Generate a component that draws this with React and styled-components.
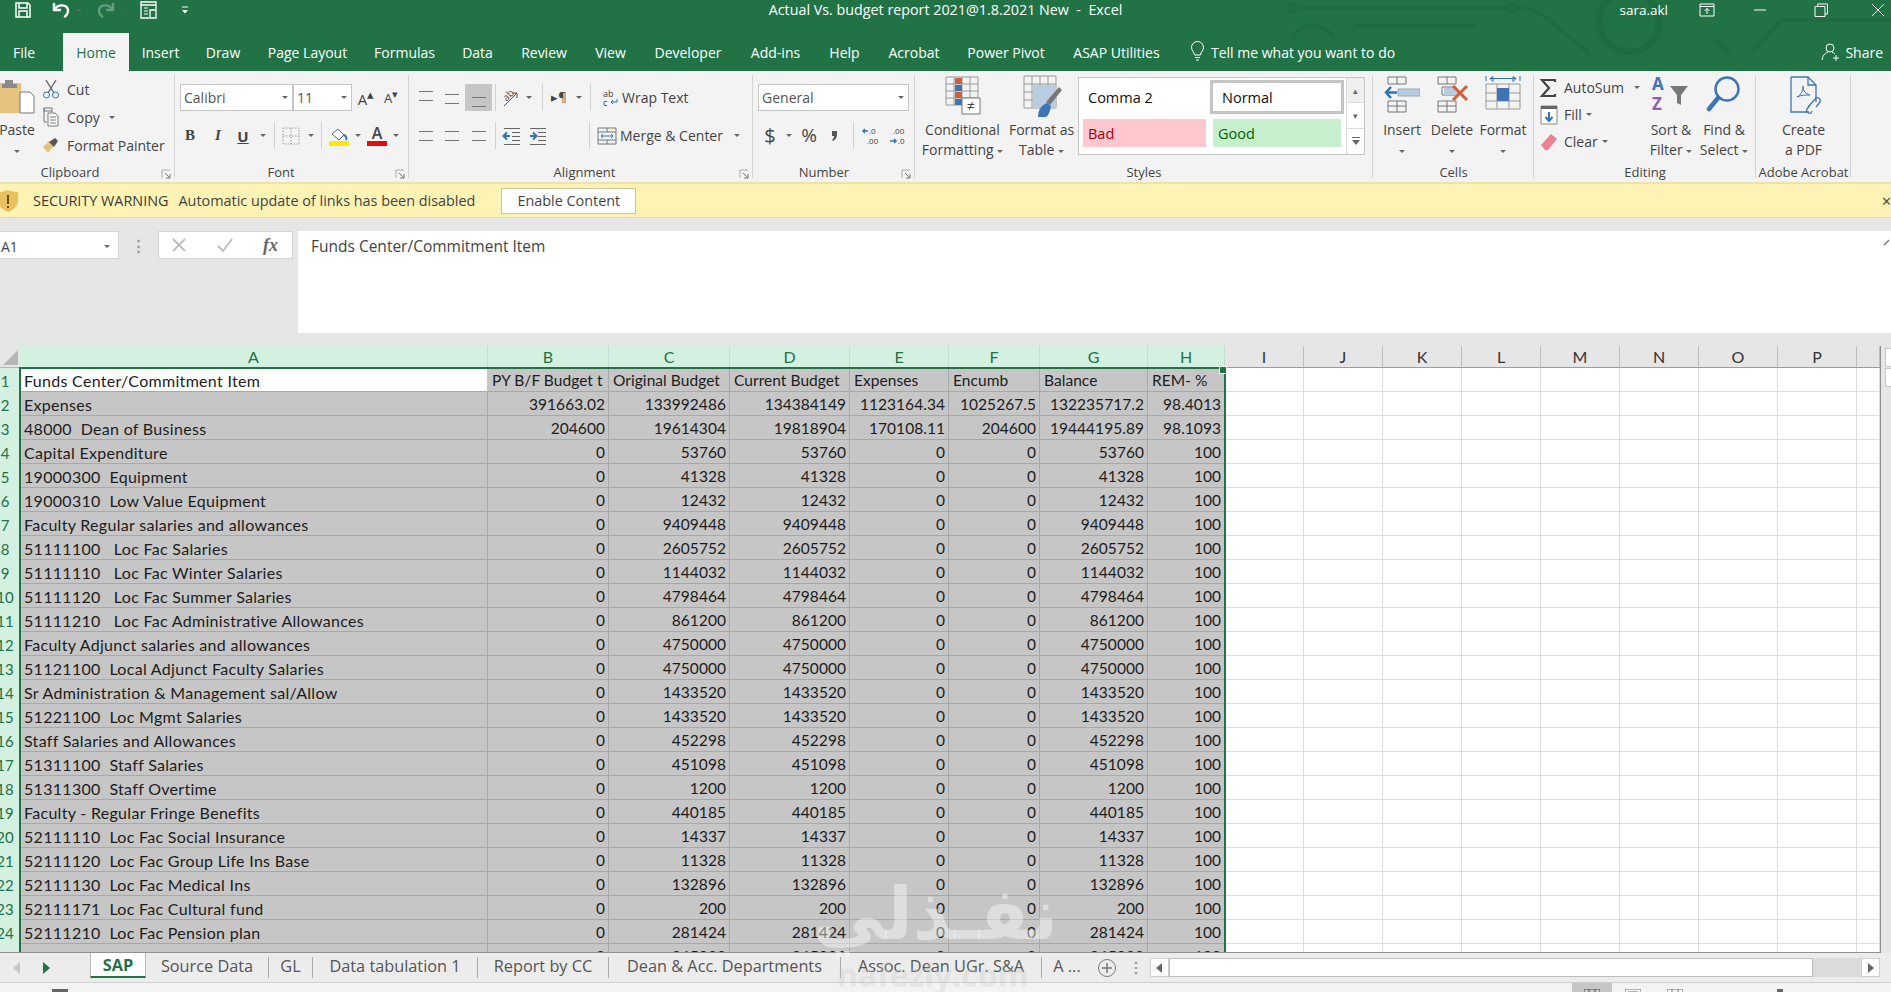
import React from 'react'
import styled, { createGlobalStyle } from 'styled-components'

const GREEN = '#217346'
const UI = '"Open Sans", "Noto Sans", sans-serif'
const CELL = 'Lato, "Noto Sans", sans-serif'

const Global = createGlobalStyle`
  html, body { margin: 0; padding: 0; background: #f3f3f3; overflow: hidden; }
  #root { width: 1891px; height: 992px; overflow: hidden; }
`

const Page = styled.div`
  position: relative;
  width: 1891px;
  height: 992px;
  overflow: hidden;
  display: flex;
  flex-direction: column;
  font-family: ${UI};
  color: #444;
  background: #e6e6e6;
`

/* title bar */
const Head = styled.header`
  position: relative;
  background: ${GREEN};
  color: #fff;
  height: 71px;
  flex: none;
`
const Circuit = styled.svg`
  position: absolute;
  right: 0;
  top: 0;
`
const TitleRow = styled.div`
  position: relative;
  display: grid;
  grid-template-columns: 1fr auto 1fr;
  height: 33px;
`
const Quick = styled.div`
  display: flex;
  align-items: center;
  height: 20px;
`
const QuickSlot = styled.span`
  width: ${p => p.$w}px;
  margin-left: ${p => p.$ml || 0}px;
  display: flex;
  justify-content: center;
  opacity: ${p => (p.$dim ? 0.3 : 1)};
`
const Title = styled.div`
  font-size: 14.3px;
  line-height: 20px;
  white-space: pre;
`
const WindowBtns = styled.div`
  display: flex;
  justify-content: flex-end;
  align-items: center;
  height: 20px;
`
const UserName = styled.span`
  font-size: 13.5px;
  margin-right: 30px;
`
const WinSlot = styled.span`
  width: ${p => p.$w}px;
  margin-left: ${p => p.$ml || 0}px;
  display: flex;
  justify-content: center;
`
const TabRow = styled.nav`
  position: relative;
  display: flex;
  height: 38px;
  align-items: stretch;
  font-size: 14px;
`
const RibbonTab = styled.div`
  display: flex;
  align-items: center;
  white-space: pre;
  width: ${p => p.$w}px;
  margin-right: ${p => p.$mr || 0}px;
  justify-content: center;
  flex: none;
  ${p => p.$active && `background:#f3f3f3;color:${GREEN};`}
`
const TellMe = styled.div`
  display: flex;
  align-items: center;
  gap: 6px;
  margin-left: 15px;
`
const Share = styled.div`
  margin-left: auto;
  margin-right: 8px;
  display: flex;
  align-items: center;
  gap: 4px;
`

/* ribbon */
const Ribbon = styled.section`
  display: flex;
  height: 111px;
  flex: none;
  background: #f3f3f3;
  font-size: 14px;
  color: #444;
`
const Group = styled.div`
  position: relative;
  width: ${p => p.$w}px;
  flex: none;
  display: flex;
  flex-direction: column;
  &::after {
    content: '';
    position: absolute;
    right: 0;
    top: 4px;
    bottom: 4px;
    width: 1px;
    background: #d4d4d4;
  }
`
const GroupBody = styled.div`
  height: 92px;
  display: flex;
`
const GroupLabel = styled.div`
  height: 18px;
  line-height: 18px;
  text-align: center;
  font-size: 13px;
  white-space: nowrap;
  padding: 0 ${p => p.$pr || 0}px 0 ${p => p.$pl || 0}px;
`
const Launcher = styled.svg`
  position: absolute;
  right: 4px;
  bottom: 3px;
`
const Stack = styled.div`
  display: flex;
  flex-direction: column;
  ${p => p.$w && `width:${p.$w}px;flex:none;`}
`
const ToolRow = styled.div`
  display: flex;
  align-items: center;
  height: 27px;
  margin-top: ${p => p.$mt}px;
  padding-left: ${p => p.$pl || 0}px;
`
const Slot = styled.span`
  width: ${p => p.$w}px;
  height: 27px;
  flex: none;
  display: flex;
  align-items: center;
  justify-content: center;
  color: #444;
  ${p => p.$on && 'background:#c6c6c6;'}
`
const Sep = styled.i`
  width: 1px;
  height: 27px;
  flex: none;
  background: #d0d0d0;
  margin: 0 ${p => p.$mr ?? 2}px 0 ${p => p.$ml ?? 2}px;
`
const Combo = styled.div`
  width: ${p => p.$w}px;
  height: 27px;
  flex: none;
  box-sizing: border-box;
  border: 1px solid #c6c6c6;
  background: #fff;
  display: flex;
  align-items: center;
  justify-content: space-between;
  padding: 0 4px 0 3px;
  color: #555;
`
const Bold = styled.b`
  font-size: 15px;
  font-family: "Liberation Serif", serif;
`
const ItalicMark = styled.i`
  font-size: 15px;
  font-weight: 700;
  font-family: "Liberation Serif", serif;
`
const UnderMark = styled.u`
  font-size: 15px;
  font-weight: 700;
`
const Symbol = styled.span`
  font-size: ${p => p.$size || 18}px;
  font-weight: ${p => p.$weight || 400};
  line-height: 1;
`
const SmallRow = styled.div`
  display: flex;
  align-items: center;
  height: ${p => p.$h}px;
  margin-left: ${p => p.$ml || 0}px;
  white-space: nowrap;
`
const SmallIcon = styled.span`
  width: ${p => p.$w}px;
  flex: none;
  display: flex;
  justify-content: center;
`
const Caret = styled.span`
  display: inline-block;
  width: 0;
  height: 0;
  border-left: 3px solid transparent;
  border-right: 3px solid transparent;
  border-top: 3.5px solid #666;
  margin-left: ${p => p.$ml ?? 0}px;
  vertical-align: middle;
`
const BigBtn = styled.div`
  width: ${p => p.$w}px;
  flex: none;
  display: flex;
  flex-direction: column;
  align-items: center;
  white-space: nowrap;
  margin-left: ${p => p.$ml || 0}px;
`
const BigIcon = styled.div`
  height: 49px;
  padding-top: 4px;
  box-sizing: border-box;
`
const BigLine = styled.div`
  height: 20px;
  line-height: 20px;
  text-align: center;
`
const Gallery = styled.div`
  margin: 6px 0 0 0;
  width: 287px;
  height: 78px;
  box-sizing: border-box;
  border: 1px solid #c6c6c6;
  background: #fff;
  display: flex;
`
const StyleGrid = styled.div`
  width: 267px;
  display: grid;
  grid-template-columns: 131px 136px;
  grid-template-rows: 39px 37px;
`
const StyleCell = styled.div`
  display: flex;
  align-items: center;
  padding-left: ${p => p.$pl || 9}px;
  margin: ${p => p.$m || 0};
  font-size: 14.5px;
  background: ${p => p.$bg || '#fff'};
  color: ${p => p.$fg || '#111'};
  ${p => p.$boxed && 'border:3px solid #c4c4c4;margin:2px 2px 3px 0;padding-left:9px;'}
`
const GalleryScroll = styled.div`
  flex: 1;
  display: grid;
  grid-template-rows: 1fr 1fr 1fr;
  border-left: 1px solid #dcdcdc;
  color: #666;
  font-size: 9px;
`
const GalleryBtn = styled.div`
  display: flex;
  align-items: center;
  justify-content: center;
  background: ${p => (p.$dim ? '#efefef' : '#fff')};
  border-bottom: 1px solid #dcdcdc;
  &:last-child { border-bottom: 0; }
`

/* security warning */
const Warning = styled.div`
  height: 36px;
  flex: none;
  box-sizing: border-box;
  background: #fdf3b4;
  border-top: 2px solid #ece3a8;
  border-bottom: 1px solid #e2dca4;
  display: flex;
  align-items: center;
  font-size: 14.4px;
  color: #444;
  white-space: pre;
`
const WarningTitle = styled.span`
  margin-left: 13px;
  color: #3a3a3a;
`
const WarningText = styled.span`
  margin-left: 10px;
`
const EnableBtn = styled.div`
  margin-left: 26px;
  width: 135px;
  height: 26px;
  box-sizing: border-box;
  background: #fff;
  border: 1px solid #c9c5a0;
  display: flex;
  align-items: center;
  justify-content: center;
`
const WarningClose = styled.span`
  margin-left: auto;
  margin-right: -1px;
  font-size: 13px;
  color: #555;
`

/* formula bar */
const FormulaBar = styled.div`
  height: 102px;
  margin-top: 13px;
  flex: none;
  display: flex;
  align-items: flex-start;
  font-size: 15.5px;
`
const NameBox = styled.div`
  width: 119px;
  height: 28px;
  box-sizing: border-box;
  background: #fff;
  border: 1px solid #d4d4d4;
  border-left: 0;
  display: flex;
  align-items: center;
  justify-content: space-between;
  padding: 2px 8px 0 1px;
  font-size: 14px;
  color: #444;
`
const Dots = styled.span`
  width: 39px;
  height: 28px;
  display: flex;
  align-items: center;
  justify-content: center;
  color: #999;
  font-size: 15px;
  font-weight: 700;
`
const FormulaBtns = styled.div`
  width: 135px;
  height: 28px;
  box-sizing: border-box;
  background: #fff;
  border: 1px solid #d4d4d4;
  display: flex;
  align-items: center;
  padding-left: 12px;
  gap: 29px;
  color: #bbb;
`
const Fx = styled.i`
  font-family: "Liberation Serif", serif;
  font-size: 18px;
  font-weight: 700;
  color: #666;
`
const FormulaInput = styled.div`
  margin-left: 5px;
  flex: 1;
  height: 102px;
  box-sizing: border-box;
  background: #fff;
  padding: 4px 0 0 13px;
  line-height: 22px;
  color: #444;
  position: relative;
`
const Collapse = styled.svg`
  position: absolute;
  right: 0;
  top: 8px;
`

/* sheet */
const SheetArea = styled.div`
  margin-top: 13px;
  height: 607px;
  flex: none;
  display: flex;
`
const Sheet = styled.div`
  position: relative;
  width: 1881px;
  box-sizing: border-box;
  border-right: 1px solid #8f8f8f;
  border-bottom: 1px solid #8f8f8f;
  background: #fff;
  overflow: hidden;
`
const SheetGrid = styled.div`
  display: grid;
  grid-template-columns: 20px 468px 121px 121px 120px 99px 91px 108px 77px repeat(8, 79px) 23px;
  grid-template-rows: 22px repeat(25, 24px);
`
const Corner = styled.div`
  background: #e6e6e6;
  border-bottom: 1px solid #b5b5b5;
  display: flex;
  align-items: flex-end;
  justify-content: flex-end;
  padding: 0 2px 2px 0;
  box-sizing: border-box;
`
const ColHead = styled.div`
  box-sizing: border-box;
  display: flex;
  align-items: center;
  justify-content: center;
  font-family: ${CELL};
  font-size: 16px;
  background: ${p => (p.$on ? '#d3f0e0' : '#e6e6e6')};
  color: ${p => (p.$on ? GREEN : '#333')};
  border-right: 1px solid ${p => (p.$on ? '#bfe0cf' : '#bdbdbd')};
  border-bottom: 1px solid ${p => (p.$on ? GREEN : '#9c9c9c')};
`
const RowHead = styled.div`
  box-sizing: border-box;
  background: #d3f0e0;
  color: ${GREEN};
  font-family: ${CELL};
  font-size: 15px;
  display: flex;
  align-items: center;
  justify-content: center;
  padding: 1px 10px 0 0;
  width: 20px;
  overflow: visible;
`
const Cell = styled.div`
  box-sizing: border-box;
  font-family: ${CELL};
  font-size: ${p => (p.$label ? 16 : 15.5)}px;
  letter-spacing: ${p => (p.$label ? 0.3 : 0.05)}px;
  line-height: 25px;
  white-space: pre;
  overflow: hidden;
  color: #1c1c1c;
  text-align: ${p => (p.$right ? 'right' : 'left')};
  padding: ${p => (p.$right ? '0 3px 0 0' : '0 0 0 4px')};
  background: ${p => (p.$sel ? (p.$white ? '#fff' : '#c6c6c6') : '#fff')};
  border-right: 1px solid ${p => (p.$sel ? (p.$white ? '#c6c6c6' : '#a8a8a8') : '#dcdcdc')};
  border-bottom: 1px solid ${p => (p.$sel ? '#a8a8a8' : '#dcdcdc')};
`
const SelectionFrame = styled.div`
  position: absolute;
  left: 19px;
  top: 21px;
  width: 1207px;
  height: 620px;
  box-sizing: border-box;
  border: 2px solid ${GREEN};
  pointer-events: none;
  &::after {
    content: '';
    position: absolute;
    right: -3px;
    top: -3px;
    width: 6px;
    height: 6px;
    background: ${GREEN};
    border: 1px solid #fff;
  }
`
const VScroll = styled.div`
  flex: 1;
  display: flex;
  flex-direction: column;
  gap: 1px;
  padding: 2px 0 0 4px;
  background: #e6e6e6;
`
const VBtn = styled.div`
  height: ${p => p.$h}px;
  background: #fff;
  border: 1px solid #c8c8c8;
  border-right: 0;
  box-sizing: border-box;
`

/* sheet tabs */
const TabStrip = styled.div`
  height: 29px;
  flex: none;
  display: flex;
  background: #ececec;
  font-size: 16.3px;
  color: #555;
`
const NavSlot = styled.span`
  width: ${p => p.$w}px;
  flex: none;
  display: flex;
  align-items: center;
  justify-content: center;
`
const SheetTab = styled.div`
  height: 25px;
  flex: none;
  width: ${p => p.$w}px;
  box-sizing: border-box;
  display: flex;
  align-items: center;
  justify-content: center;
  white-space: nowrap;
  ${p => p.$active && `background:#fff;color:${GREEN};font-weight:700;border-bottom:2px solid ${GREEN};border-left:1px solid #bbb;border-right:1px solid #bbb;`}
`
const TabSep = styled.i`
  width: 1px;
  height: 21px;
  margin-top: 4px;
  flex: none;
  background: #aaa;
`
const HScroll = styled.div`
  margin: 5px 0 0 0;
  width: 730px;
  height: 19px;
  display: flex;
`
const HBtn = styled.div`
  width: 19px;
  box-sizing: border-box;
  background: #fff;
  border: 1px solid #cfcfcf;
  display: flex;
  align-items: center;
  justify-content: center;
`
const HThumb = styled.div`
  width: 645px;
  background: #fff;
  box-sizing: border-box;
  border: 1px solid #bdbdbd;
`
const HTrack = styled.div`
  width: 48px;
  background: #dbdbdb;
`

/* status bar */
const StatusBar = styled.footer`
  flex: 1;
  display: flex;
  background: #f3f3f3;
  border-top: 1px solid #cfcfcf;
  overflow: hidden;
`
const ViewBtn = styled.span`
  width: ${p => p.$w}px;
  margin-left: ${p => p.$ml || 0}px;
  flex: none;
  display: flex;
  justify-content: center;
  padding-top: 6px;
  ${p => p.$on && 'background:#c6c6c6;'}
`

/* site watermark burnt into the picture */
const Watermark = styled.div`
  position: absolute;
  left: 813px;
  top: 868px;
  width: 240px;
  text-align: center;
  color: rgba(255, 255, 255, 0.42);
  font-family: "DejaVu Sans", sans-serif;
  font-weight: 700;
  font-size: 72px;
  line-height: 92px;
  white-space: nowrap;
  pointer-events: none;
`
const WatermarkUrl = styled.div`
  font-size: 32px;
  line-height: 30px;
  color: rgba(200, 200, 200, 0.3);
  font-family: "Open Sans", sans-serif;
`

const Ico = ({ w, h, children }) => (
  <svg width={w} height={h} viewBox={`0 0 ${w} ${h}`} fill="none">{children}</svg>
)

const Launch = () => (
  <Launcher width="10" height="10" viewBox="0 0 10 10" fill="none">
    <path d="M1 9V1h8" stroke="#aaa" />
    <path d="M4 4l5 5M9 5v4H5" stroke="#777" />
  </Launcher>
)

const AlignLines = ({ y, widths, align = 'l' }) => (
  <Ico w={18} h={20}>
    {widths.map((l, i) => {
      const x = align === 'l' ? 2 : align === 'r' ? 16 - l : 9 - l / 2
      return <path key={i} d={`M${x} ${y + i * 4.5}.5h${l}`} stroke="#777" />
    })}
  </Ico>
)

const IndentIcon = ({ flip }) => (
  <Ico w={20} h={20}>
    {[2, 6, 10, 14, 18].map(y => <path key={y} d={`M${y === 2 || y === 18 ? 2 : 10} ${y}.5H18`} stroke="#666" />)}
    <path d={flip ? 'M2 10h6M5 6.5L8.5 10 5 13.5' : 'M8 10H2M5 6.5L1.5 10 5 13.5'} stroke="#2f75b5" strokeWidth="2" />
  </Ico>
)

const ribbonTabs = [
  ['File', 48, false, 15], ['Home', 66, true], ['Insert', 63], ['Draw', 62], ['Page Layout', 107], ['Formulas', 87],
  ['Data', 59], ['Review', 74], ['View', 59], ['Developer', 96], ['Add-ins', 79], ['Help', 59],
  ['Acrobat', 80], ['Power Pivot', 104], ['ASAP Utilities', 117],
]

const columns = ['A', 'B', 'C', 'D', 'E', 'F', 'G', 'H']
const freeColumns = ['I', 'J', 'K', 'L', 'M', 'N', 'O', 'P', '']

const header = ['Funds Center/Commitment Item', 'PY B/F Budget t', 'Original Budget', 'Current Budget', 'Expenses', 'Encumb', 'Balance', 'REM- %']

const zeroRow = (label, value) => [label, '0', value, value, '0', '0', value, '100']

const rows = [
  ['Expenses', '391663.02', '133992486', '134384149', '1123164.34', '1025267.5', '132235717.2', '98.4013'],
  ['48000  Dean of Business', '204600', '19614304', '19818904', '170108.11', '204600', '19444195.89', '98.1093'],
  zeroRow('Capital Expenditure', '53760'),
  zeroRow('19000300  Equipment', '41328'),
  zeroRow('19000310  Low Value Equipment', '12432'),
  zeroRow('Faculty Regular salaries and allowances', '9409448'),
  zeroRow('51111100   Loc Fac Salaries', '2605752'),
  zeroRow('51111110   Loc Fac Winter Salaries', '1144032'),
  zeroRow('51111120   Loc Fac Summer Salaries', '4798464'),
  zeroRow('51111210   Loc Fac Administrative Allowances', '861200'),
  zeroRow('Faculty Adjunct salaries and allowances', '4750000'),
  zeroRow('51121100  Local Adjunct Faculty Salaries', '4750000'),
  zeroRow('Sr Administration & Management sal/Allow', '1433520'),
  zeroRow('51221100  Loc Mgmt Salaries', '1433520'),
  zeroRow('Staff Salaries and Allowances', '452298'),
  zeroRow('51311100  Staff Salaries', '451098'),
  zeroRow('51311300  Staff Overtime', '1200'),
  zeroRow('Faculty - Regular Fringe Benefits', '440185'),
  zeroRow('52111110  Loc Fac Social Insurance', '14337'),
  zeroRow('52111120  Loc Fac Group Life Ins Base', '11328'),
  zeroRow('52111130  Loc Fac Medical Ins', '132896'),
  zeroRow('52111171  Loc Fac Cultural fund', '200'),
  zeroRow('52111210  Loc Fac Pension plan', '281424'),
  zeroRow('Administration and Management of Loc F', '265000'),
]

const TitleBar = () => (
  <Head>
    <Circuit width="620" height="71" viewBox="0 0 620 71" fill="none" stroke="#1f6c42" strokeWidth="4">
      <circle cx="21" cy="8" r="4" />
      <path d="M25 8h212M245 8c20 0 30 8 40 18l34 28" />
      <circle cx="241" cy="8" r="4" />
      <circle cx="358" cy="22" r="30" strokeWidth="7" />
      <path d="M22 38c4-16 34-16 40 0M80 30l5-4h120M480 54l30-34h110M460 54l-16-14" />
    </Circuit>
    <TitleRow>
      <Quick>
        <QuickSlot $w={18} $ml={14}>
          <Ico w={18} h={18}>
            <path d="M2 2h12l2 2v12H2z" stroke="#fff" strokeWidth="1.5" />
            <path d="M5 2v5h8V2M5 16v-6h8v6" stroke="#fff" strokeWidth="1.5" />
          </Ico>
        </QuickSlot>
        <QuickSlot $w={20} $ml={20}>
          <Ico w={20} h={18}>
            <path d="M3 8c3-5 12-5 13 1 .5 3-2 6-4 7" stroke="#fff" strokeWidth="2.4" />
            <path d="M2 2v7h7" stroke="#fff" strokeWidth="2.4" />
          </Ico>
        </QuickSlot>
        <QuickSlot $w={10} $ml={2}><Caret /></QuickSlot>
        <QuickSlot $w={20} $ml={11} $dim>
          <Ico w={20} h={18}>
            <path d="M17 8c-3-5-12-5-13 1-.5 3 2 6 4 7" stroke="#fff" strokeWidth="2.4" />
            <path d="M18 2v7h-7" stroke="#fff" strokeWidth="2.4" />
          </Ico>
        </QuickSlot>
        <QuickSlot $w={10} $ml={2} $dim><Caret /></QuickSlot>
        <QuickSlot $w={20} $ml={12}>
          <Ico w={20} h={18}>
            <path d="M2 1h15v3H2zM2 4v13h8M17 4v4" stroke="#fff" strokeWidth="1.3" />
            <path d="M5 7h4M5 10h4M5 13h4" stroke="#fff" />
            <path d="M11 9h6v8h-6z" stroke="#fff" strokeWidth="1.3" />
          </Ico>
        </QuickSlot>
        <QuickSlot $w={10} $ml={21}>
          <Ico w={10} h={10}>
            <path d="M2 2h6" stroke="#fff" />
            <path d="M2 5h6L5 8.5z" fill="#fff" />
          </Ico>
        </QuickSlot>
      </Quick>
      <Title>Actual Vs. budget report 2021@1.8.2021 New  -  Excel</Title>
      <WindowBtns>
        <UserName>sara.akl</UserName>
        <WinSlot $w={18}>
          <Ico w={16} h={14}>
            <path d="M1 1h14v12H1zM1 3.5h14M8 11V5.5M5.5 8L8 5.5 10.500 8" stroke="#fff" />
          </Ico>
        </WinSlot>
        <WinSlot $w={26} $ml={31}>
          <Ico w={14} h={14}><path d="M1 7h12" stroke="#fff" /></Ico>
        </WinSlot>
        <WinSlot $w={26} $ml={35}>
          <Ico w={14} h={14}><path d="M1 3.500h10v10H1zM3.500 3V1h10v10H11" stroke="#fff" /></Ico>
        </WinSlot>
        <WinSlot $w={26} $ml={31}>
          <Ico w={14} h={14}><path d="M1 1l12 12M13 1L1 13" stroke="#fff" /></Ico>
        </WinSlot>
      </WindowBtns>
    </TitleRow>
    <TabRow>
      {ribbonTabs.map(([label, w, active, mr]) => (
        <RibbonTab key={label} $w={w} $active={active} $mr={mr}>{label}</RibbonTab>
      ))}
      <TellMe>
        <Ico w={15} h={22}>
          <path d="M4.500 14c0-3-3-4-3-7.500a6 6 0 0 1 12 0c0 3.500-3 4.500-3 7.500zM5 16.500h5M6 19h3" stroke="#fff" />
        </Ico>
        Tell me what you want to do
      </TellMe>
      <Share>
        <Ico w={20} h={20}>
          <circle cx="9" cy="6" r="4" stroke="#fff" />
          <path d="M1 18c1-6 4-7 6-8M11 10c1 .3 2 1 3 2M15 13v6M12 16h6" stroke="#fff" />
        </Ico>
        Share
      </Share>
    </TabRow>
  </Head>
)

const ClipboardGroup = () => (
  <Group $w={175}>
    <GroupBody>
      <BigBtn $w={34}>
        <BigIcon>
          <Ico w={36} h={42}>
            <path d="M-4 8h26v30H-4z" fill="#e7c27d" />
            <path d="M6 5h8v4h4v4H3V9h3z" fill="#8a8a8a" />
            <path d="M21 17h10l4 4v17H21z" fill="#fff" stroke="#777" />
          </Ico>
        </BigIcon>
        <BigLine>Paste</BigLine>
        <BigLine><Caret /></BigLine>
      </BigBtn>
      <Stack>
        <SmallRow $h={4} />
        <SmallRow $h={28}>
          <SmallIcon $w={33}>
            <Ico w={18} h={20}>
              <path d="M4 1l8 13M14 1L6 14" stroke="#666" strokeWidth="1.4" />
              <circle cx="4.500" cy="16" r="3" stroke="#2f75b5" />
              <circle cx="13.500" cy="16" r="3" stroke="#2f75b5" />
            </Ico>
          </SmallIcon>
          Cut
        </SmallRow>
        <SmallRow $h={28}>
          <SmallIcon $w={33}>
            <Ico w={18} h={20}>
              <path d="M2 1h8v3H2zM2 1v14h3M10 4v1" stroke="#777" />
              <path d="M6 6h7l3 3v10H6zM8 10h6M8 13h6M8 16h6" stroke="#777" fill="#fff" />
            </Ico>
          </SmallIcon>
          Copy
          <Caret $ml={9} />
        </SmallRow>
        <SmallRow $h={28}>
          <SmallIcon $w={33}>
            <Ico w={18} h={18}>
              <path d="M1 11l6-6 5 5-6 7z" fill="#e7c27d" />
              <path d="M7 6l6-4 3 3-4 6z" fill="#555" />
            </Ico>
          </SmallIcon>
          Format Painter
        </SmallRow>
      </Stack>
    </GroupBody>
    <GroupLabel $pr={35}>Clipboard</GroupLabel>
    <Launch />
  </Group>
)

const FontGroup = () => (
  <Group $w={234}>
    <GroupBody>
      <Stack>
        <ToolRow $mt={13} $pl={5}>
          <Combo $w={113}>Calibri<Caret /></Combo>
          <Combo $w={59}>11<Caret /></Combo>
          <Slot $w={28}><Symbol $size={15}>A<sup>▴</sup></Symbol></Slot>
          <Slot $w={22}><Symbol $size={13}>A<sup>▾</sup></Symbol></Slot>
        </ToolRow>
        <ToolRow $mt={11} $pl={1}>
          <Slot $w={28}><Bold>B</Bold></Slot>
          <Slot $w={28}><ItalicMark>I</ItalicMark></Slot>
          <Slot $w={22}><UnderMark>U</UnderMark></Slot>
          <Slot $w={18}><Caret /></Slot>
          <Sep />
          <Slot $w={28}>
            <Ico w={18} h={18}>
              <path d="M1 1h16v16H1zM9 1v16M1 9h16" stroke="#999" strokeDasharray="1.500 1.500" />
            </Ico>
          </Slot>
          <Slot $w={12}><Caret /></Slot>
          <Sep $ml={4} $mr={3} />
          <Slot $w={28}>
            <Ico w={22} h={22}>
              <path d="M4 9l6-5 6 6-5 5z" stroke="#666" fill="#fff" />
              <path d="M16 10c2 1 3 3 2 5" stroke="#2f75b5" strokeWidth="2" />
              <path d="M1 16h20v5H1z" fill="#ffea00" />
            </Ico>
          </Slot>
          <Slot $w={10}><Caret /></Slot>
          <Slot $w={28}>
            <Ico w={22} h={22}>
              <text x="11" y="14" textAnchor="middle" fontSize="16" fontWeight="600" fontFamily={UI} fill="#444">A</text>
              <path d="M1 16h20v5H1z" fill="#e01010" />
            </Ico>
          </Slot>
          <Slot $w={10}><Caret /></Slot>
        </ToolRow>
      </Stack>
    </GroupBody>
    <GroupLabel $pr={22}>Font</GroupLabel>
    <Launch />
  </Group>
)

const AlignmentGroup = () => (
  <Group $w={344}>
    <GroupBody>
      <Stack>
        <ToolRow $mt={13} $pl={4}>
          <Slot $w={26}><AlignLines y={3} widths={[14, 14, 14]} /></Slot>
          <Slot $w={26}><AlignLines y={6} widths={[14, 14, 14]} /></Slot>
          <Slot $w={27} $on><AlignLines y={9} widths={[14, 14, 14]} /></Slot>
          <Sep $ml={3} $mr={3} />
          <Slot $w={26}>
            <Ico w={20} h={20}>
              <text x="1" y="11" fontSize="10" fontFamily={UI} fill="#555" transform="rotate(-45 6 8)">ab</text>
              <path d="M2 18l13-13M15 5v5M15 5h-5" stroke="#555" />
            </Ico>
          </Slot>
          <Slot $w={8}><Caret /></Slot>
          <Sep $ml={9} $mr={4} />
          <Slot $w={24}><Symbol $size={13}>▸¶</Symbol></Slot>
          <Slot $w={16}><Caret /></Slot>
          <Sep $ml={3} $mr={11} />
          <Slot $w={18}>
            <Ico w={18} h={20}>
              <text x="1" y="9" fontSize="9" fontFamily={UI} fill="#444">ab</text>
              <text x="1" y="18" fontSize="9" fontFamily={UI} fill="#444">c</text>
              <path d="M15 11v3H9M11 12l-2 2 2 2" stroke="#2f75b5" />
            </Ico>
          </Slot>
          <SmallRow $h={27} $ml={2}>Wrap Text</SmallRow>
        </ToolRow>
        <ToolRow $mt={11} $pl={4}>
          <Slot $w={26}><AlignLines y={5} widths={[14, 10, 14, 10]} /></Slot>
          <Slot $w={26}><AlignLines y={5} align="c" widths={[14, 10, 14, 10]} /></Slot>
          <Slot $w={27}><AlignLines y={5} align="r" widths={[14, 10, 14, 10]} /></Slot>
          <Sep $ml={3} $mr={3} />
          <Slot $w={26}><IndentIcon /></Slot>
          <Slot $w={26}><IndentIcon flip /></Slot>
          <Slot $w={22} />
          <Sep $ml={16} $mr={6} />
          <Slot $w={22}>
            <Ico w={20} h={20}>
              <path d="M1 2h18v16H1zM1 6h18M1 14h18M10 2v4M10 14v4" stroke="#777" />
              <path d="M4 10h12M6 8l-2 2 2 2M14 8l2 2-2 2" stroke="#2f75b5" />
            </Ico>
          </Slot>
          <SmallRow $h={27} $ml={2}>Merge &amp; Center<Caret $ml={11} /></SmallRow>
        </ToolRow>
      </Stack>
    </GroupBody>
    <GroupLabel $pl={7}>Alignment</GroupLabel>
    <Launch />
  </Group>
)

const NumberGroup = () => (
  <Group $w={162}>
    <GroupBody>
      <Stack>
        <ToolRow $mt={13} $pl={5}>
          <Combo $w={151}>General<Caret /></Combo>
        </ToolRow>
        <ToolRow $mt={11} $pl={5}>
          <Slot $w={24}><Symbol $size={20}>$</Symbol></Slot>
          <Slot $w={14}><Caret /></Slot>
          <Slot $w={26}><Symbol $size={19}>%</Symbol></Slot>
          <Slot $w={26}>
            <Ico w={8} h={12}><path d="M1 1h5v4c0 3-2 5-4 6l-1-1c1-1 2-2 2-4H1z" fill="#555" /></Ico>
          </Slot>
          <Sep $ml={5} $mr={4} />
          <Slot $w={26}>
            <Ico w={20} h={20}>
              <text x="8" y="8" fontSize="8" fill="#444" fontFamily={UI}>.0</text>
              <text x="6" y="18" fontSize="8" fill="#444" fontFamily={UI}>.00</text>
              <path d="M7 5H2M4 3L2 5l2 2" stroke="#2f75b5" strokeWidth="1.500" />
            </Ico>
          </Slot>
          <Slot $w={26}>
            <Ico w={20} h={20}>
              <text x="6" y="8" fontSize="8" fill="#444" fontFamily={UI}>.00</text>
              <text x="11" y="18" fontSize="8" fill="#444" fontFamily={UI}>.0</text>
              <path d="M3 15h6M7 13l2 2-2 2" stroke="#2f75b5" strokeWidth="1.500" />
            </Ico>
          </Slot>
        </ToolRow>
      </Stack>
    </GroupBody>
    <GroupLabel $pr={20}>Number</GroupLabel>
    <Launch />
  </Group>
)

const StylesGroup = () => (
  <Group $w={458}>
    <GroupBody>
      <BigBtn $w={85} $ml={5}>
        <BigIcon>
          <Ico w={38} h={42}>
            <path d="M2 2h32v28H2zM2 9h32M2 16h32M2 23h32M10 2v28M18 2v28M26 2v28" stroke="#999" />
            <path d="M11 3h7v6h-7z" fill="#d0603a" />
            <path d="M11 10h7v6h-7z" fill="#3f74b5" />
            <path d="M11 17h7v6h-7z" fill="#d0603a" />
            <path d="M11 24h7v6h-7z" fill="#3f74b5" />
            <path d="M18 23h18v16H18z" fill="#fff" stroke="#777" />
            <text x="27" y="36" textAnchor="middle" fontSize="14" fill="#444" fontFamily={UI}>≠</text>
          </Ico>
        </BigIcon>
        <BigLine>Conditional</BigLine>
        <BigLine>Formatting <Caret /></BigLine>
      </BigBtn>
      <BigBtn $w={73}>
        <BigIcon>
          <Ico w={40} h={42}>
            <path d="M2 1h32v32H2zM2 9h32M2 17h32M2 25h32M10 1v32M18 1v32M26 1v32" stroke="#999" />
            <path d="M11 10h23v23H11z" fill="#b9cde2" />
            <path d="M37 12l3 3-12 15-4-3z" fill="#777" />
            <path d="M16 42c0-8 4-12 9-14l4 3c-1 6-3 11-6 11z" fill="#3f74b5" />
          </Ico>
        </BigIcon>
        <BigLine>Format as</BigLine>
        <BigLine>Table <Caret /></BigLine>
      </BigBtn>
      <Gallery>
        <StyleGrid>
          <StyleCell>Comma 2</StyleCell>
          <StyleCell $boxed>Normal</StyleCell>
          <StyleCell $bg="#ffc7ce" $fg="#9c0006" $pl={5} $m="2px 4px 7px 4px">Bad</StyleCell>
          <StyleCell $bg="#c6efce" $fg="#006100" $pl={5} $m="2px 5px 7px 3px">Good</StyleCell>
        </StyleGrid>
        <GalleryScroll>
          <GalleryBtn $dim>▴</GalleryBtn>
          <GalleryBtn>▾</GalleryBtn>
          <GalleryBtn>
            <Ico w={10} h={10}>
              <path d="M1 1.500h8" stroke="#666" />
              <path d="M1 4h8L5 9z" fill="#666" />
            </Ico>
          </GalleryBtn>
        </GalleryScroll>
      </Gallery>
    </GroupBody>
    <GroupLabel>Styles</GroupLabel>
  </Group>
)

const CellsGroup = () => (
  <Group $w={161}>
    <GroupBody>
      <BigBtn $w={48} $ml={5}>
        <BigIcon>
          <Ico w={36} h={38}>
            <path d="M4 2h18v7H4zM13 2v7M4 26h18v11H4zM4 31h18M13 26v11" stroke="#777" />
            <path d="M14 14h22v7H14z" fill="#b9cde2" stroke="#9aa" />
            <path d="M13 17.500H2M7 12l-5 5.500L7 23" stroke="#2f75b5" strokeWidth="2.500" />
          </Ico>
        </BigIcon>
        <BigLine>Insert</BigLine>
        <BigLine><Caret /></BigLine>
      </BigBtn>
      <BigBtn $w={52}>
        <BigIcon>
          <Ico w={36} h={38}>
            <path d="M4 2h18v7H4zM13 2v7M4 26h18v11H4zM4 31h18M13 26v11M8 12h14v8H8z" stroke="#777" />
            <path d="M10 13h14v7H10z" fill="#b9cde2" />
            <path d="M19 11l14 14M33 11L19 25" stroke="#d0603a" strokeWidth="3" />
          </Ico>
        </BigIcon>
        <BigLine>Delete</BigLine>
        <BigLine><Caret /></BigLine>
      </BigBtn>
      <BigBtn $w={50}>
        <BigIcon>
          <Ico w={36} h={38}>
            <path d="M1 1v5M35 1v5M5 3.500h26M5 3.500l3-2v5zM31 3.500l-3-2v5z" stroke="#2f75b5" />
            <path d="M1 9h34v25H1zM12 9v25M24 9v25M1 18h34M1 26h34" stroke="#999" />
            <path d="M12 13h12v13H12z" fill="#3f74b5" />
          </Ico>
        </BigIcon>
        <BigLine>Format</BigLine>
        <BigLine><Caret /></BigLine>
      </BigBtn>
    </GroupBody>
    <GroupLabel>Cells</GroupLabel>
  </Group>
)

const EditingGroup = () => (
  <Group $w={222}>
    <GroupBody>
      <Stack $w={112}>
        <SmallRow $h={3} />
        <SmallRow $h={27}>
          <SmallIcon $w={30}>
            <Ico w={18} h={20}>
              <path d="M15 4V2H2l7 8-7 8h13v-2" stroke="#444" strokeWidth="2.200" />
            </Ico>
          </SmallIcon>
          AutoSum
          <Caret $ml={10} />
        </SmallRow>
        <SmallRow $h={27}>
          <SmallIcon $w={30}>
            <Ico w={18} h={20}>
              <path d="M1 1h16v18H1z" stroke="#888" fill="#fff" />
              <path d="M1 1h16v3H1z" fill="#666" />
              <path d="M9 7v9M5.500 12L9 16l3.500-4" stroke="#2f75b5" strokeWidth="2" />
            </Ico>
          </SmallIcon>
          Fill
          <Caret $ml={4} />
        </SmallRow>
        <SmallRow $h={27}>
          <SmallIcon $w={30}>
            <Ico w={18} h={20}>
              <path d="M1 13L11 2l6 5-9 11H5z" fill="#ef7f92" />
            </Ico>
          </SmallIcon>
          Clear
          <Caret $ml={4} />
        </SmallRow>
      </Stack>
      <BigBtn $w={50}>
        <BigIcon>
          <Ico w={38} h={38}>
            <text x="0" y="15" fontSize="17" fontWeight="700" fontFamily={UI} fill="#3f74b5">A</text>
            <text x="0" y="35" fontSize="17" fontWeight="700" fontFamily={UI} fill="#8e5fb0">Z</text>
            <path d="M18 11h18l-7 9v10l-4-2v-8z" fill="#777" />
          </Ico>
        </BigIcon>
        <BigLine>Sort &amp;</BigLine>
        <BigLine>Filter <Caret /></BigLine>
      </BigBtn>
      <BigBtn $w={56}>
        <BigIcon>
          <Ico w={36} h={40}>
            <circle cx="21" cy="14" r="11.500" stroke="#3f74b5" strokeWidth="2.500" />
            <path d="M12 23L3 34" stroke="#3f74b5" strokeWidth="4.500" strokeLinecap="round" />
          </Ico>
        </BigIcon>
        <BigLine>Find &amp;</BigLine>
        <BigLine>Select <Caret /></BigLine>
      </BigBtn>
    </GroupBody>
    <GroupLabel>Editing</GroupLabel>
  </Group>
)

const AcrobatGroup = () => (
  <Group $w={95}>
    <GroupBody>
      <BigBtn $w={95}>
        <BigIcon>
          <Ico w={34} h={42}>
            <path d="M4 2h17l8 8v17M22 37H4V2M21 2v8h8" stroke="#3f74b5" strokeWidth="1.300" />
            <path d="M10 22c4-2 6-6 6-11 0 5 3 8 7 9-4 0-9 0-13 2z" stroke="#3f74b5" />
            <path d="M21 32l8-9a3 3 0 0 1 4 4l-4 5M25 36l-1 2a3 3 0 0 1-4-4l3-4" stroke="#3f74b5" strokeWidth="1.300" />
          </Ico>
        </BigIcon>
        <BigLine>Create</BigLine>
        <BigLine>a PDF</BigLine>
      </BigBtn>
    </GroupBody>
    <GroupLabel>Adobe Acrobat</GroupLabel>
  </Group>
)

const RibbonBar = () => (
  <Ribbon>
    <ClipboardGroup />
    <FontGroup />
    <AlignmentGroup />
    <NumberGroup />
    <StylesGroup />
    <CellsGroup />
    <EditingGroup />
    <AcrobatGroup />
  </Ribbon>
)

const FormulaRow = () => (
  <FormulaBar>
    <NameBox>A1<Caret /></NameBox>
    <Dots>⋮</Dots>
    <FormulaBtns>
      <Ico w={16} h={16}><path d="M2 2l12 12M14 2L2 14" stroke="#bbb" strokeWidth="1.800" /></Ico>
      <Ico w={18} h={16}><path d="M2 9l5 5L16 2" stroke="#bbb" strokeWidth="1.800" /></Ico>
      <Fx>fx</Fx>
    </FormulaBtns>
    <FormulaInput>
      Funds Center/Commitment Item
      <Collapse width="8" height="8" viewBox="0 0 8 8" fill="none"><path d="M1 6l5-5" stroke="#777" strokeWidth="1.500" /></Collapse>
    </FormulaInput>
  </FormulaBar>
)

const Grid = () => (
  <Sheet>
    <SheetGrid>
      <Corner>
        <Ico w={15} h={15}><path d="M15 0v15H0z" fill="#b5b5b5" /></Ico>
      </Corner>
      {columns.map(c => <ColHead key={c} $on>{c}</ColHead>)}
      {freeColumns.map((c, i) => <ColHead key={i}>{c}</ColHead>)}
      {[header, ...rows].map((row, r) => (
        <React.Fragment key={r}>
          <RowHead>{r + 1}</RowHead>
          {row.map((value, c) => (
            <Cell key={c} $sel $label={c === 0} $white={r === 0 && c === 0} $right={r > 0 && c > 0}>{value}</Cell>
          ))}
          {freeColumns.map((_, c) => <Cell key={c} />)}
        </React.Fragment>
      ))}
    </SheetGrid>
    <SelectionFrame />
  </Sheet>
)

const SheetTabs = () => (
  <TabStrip>
    <NavSlot $w={34}>
      <Ico w={8} h={12}><path d="M7 0v12L0 6z" fill="#c8c8c8" /></Ico>
    </NavSlot>
    <NavSlot $w={24}>
      <Ico w={8} h={12}><path d="M1 0v12l7-6z" fill={GREEN} /></Ico>
    </NavSlot>
    <NavSlot $w={32} />
    <SheetTab $w={56} $active>SAP</SheetTab>
    <SheetTab $w={122}>Source Data</SheetTab>
    <TabSep />
    <SheetTab $w={43}>GL</SheetTab>
    <TabSep />
    <SheetTab $w={164}>Data tabulation 1</SheetTab>
    <TabSep />
    <SheetTab $w={130}>Report by CC</SheetTab>
    <TabSep />
    <SheetTab $w={231}>Dean &amp; Acc. Departments</SheetTab>
    <TabSep />
    <SheetTab $w={200}>Assoc. Dean UGr. S&amp;A</SheetTab>
    <TabSep />
    <SheetTab $w={50}>A ...</SheetTab>
    <NavSlot $w={30}>
      <Ico w={20} h={20}>
        <circle cx="10" cy="10" r="8.500" stroke="#777" />
        <path d="M10 5v10M5 10h10" stroke="#777" strokeWidth="1.500" />
      </Ico>
    </NavSlot>
    <NavSlot $w={28}>
      <Ico w={4} h={14}><path d="M2 1v2M2 6v2M2 11v2" stroke="#999" strokeWidth="2.500" /></Ico>
    </NavSlot>
    <HScroll>
      <HBtn><Ico w={6} h={10}><path d="M6 0v10L0 5z" fill="#666" /></Ico></HBtn>
      <HThumb />
      <HTrack />
      <HBtn><Ico w={6} h={10}><path d="M0 0v10l6-5z" fill="#666" /></Ico></HBtn>
    </HScroll>
  </TabStrip>
)

const Status = () => (
  <StatusBar>
    <ViewBtn $w={16} $ml={52}>
      <Ico w={16} h={6}><path d="M0 0h16v6H0z" fill="#666" /></Ico>
    </ViewBtn>
    <ViewBtn $w={40} $ml={1504} $on>
      <Ico w={16} h={10}><path d="M0 0h16v10H0zM5 0v10M11 0v10" stroke="#555" /></Ico>
    </ViewBtn>
    <ViewBtn $w={42}>
      <Ico w={16} h={10}><path d="M0 0h16v10H0zM3 3h10v7H3z" stroke="#777" /></Ico>
    </ViewBtn>
    <ViewBtn $w={42}>
      <Ico w={16} h={10}><path d="M0 0h16v10H0zM5 0v10M11 0v10" stroke="#777" /></Ico>
    </ViewBtn>
    <ViewBtn $w={8} $ml={80}>
      <Ico w={6} h={4}><path d="M0 0h6v4H0z" fill="#666" /></Ico>
    </ViewBtn>
  </StatusBar>
)

const App = () => (
  <>
    <Global />
    <Page>
      <TitleBar />
      <RibbonBar />
      <Warning>
        <Ico w={20} h={24}>
          <path d="M-2 3c4 0 8-1 10-2 2 1 6 2 10 2v9c0 5-5 9-10 11C3 21-2 17-2 12z" fill="#e6c15c" />
          <path d="M8 6v9" stroke="#6b4e00" strokeWidth="2" />
          <path d="M8 17v2" stroke="#6b4e00" strokeWidth="2" />
        </Ico>
        <WarningTitle>SECURITY WARNING</WarningTitle>
        <WarningText>Automatic update of links has been disabled</WarningText>
        <EnableBtn>Enable Content</EnableBtn>
        <WarningClose>✕</WarningClose>
      </Warning>
      <FormulaRow />
      <SheetArea>
        <Grid />
        <VScroll>
          <VBtn $h={19} />
          <VBtn $h={19} />
        </VScroll>
      </SheetArea>
      <SheetTabs />
      <Status />
      <Watermark>
        نفـذلي
        <WatermarkUrl>nafezly.com</WatermarkUrl>
      </Watermark>
    </Page>
  </>
)

export default App
